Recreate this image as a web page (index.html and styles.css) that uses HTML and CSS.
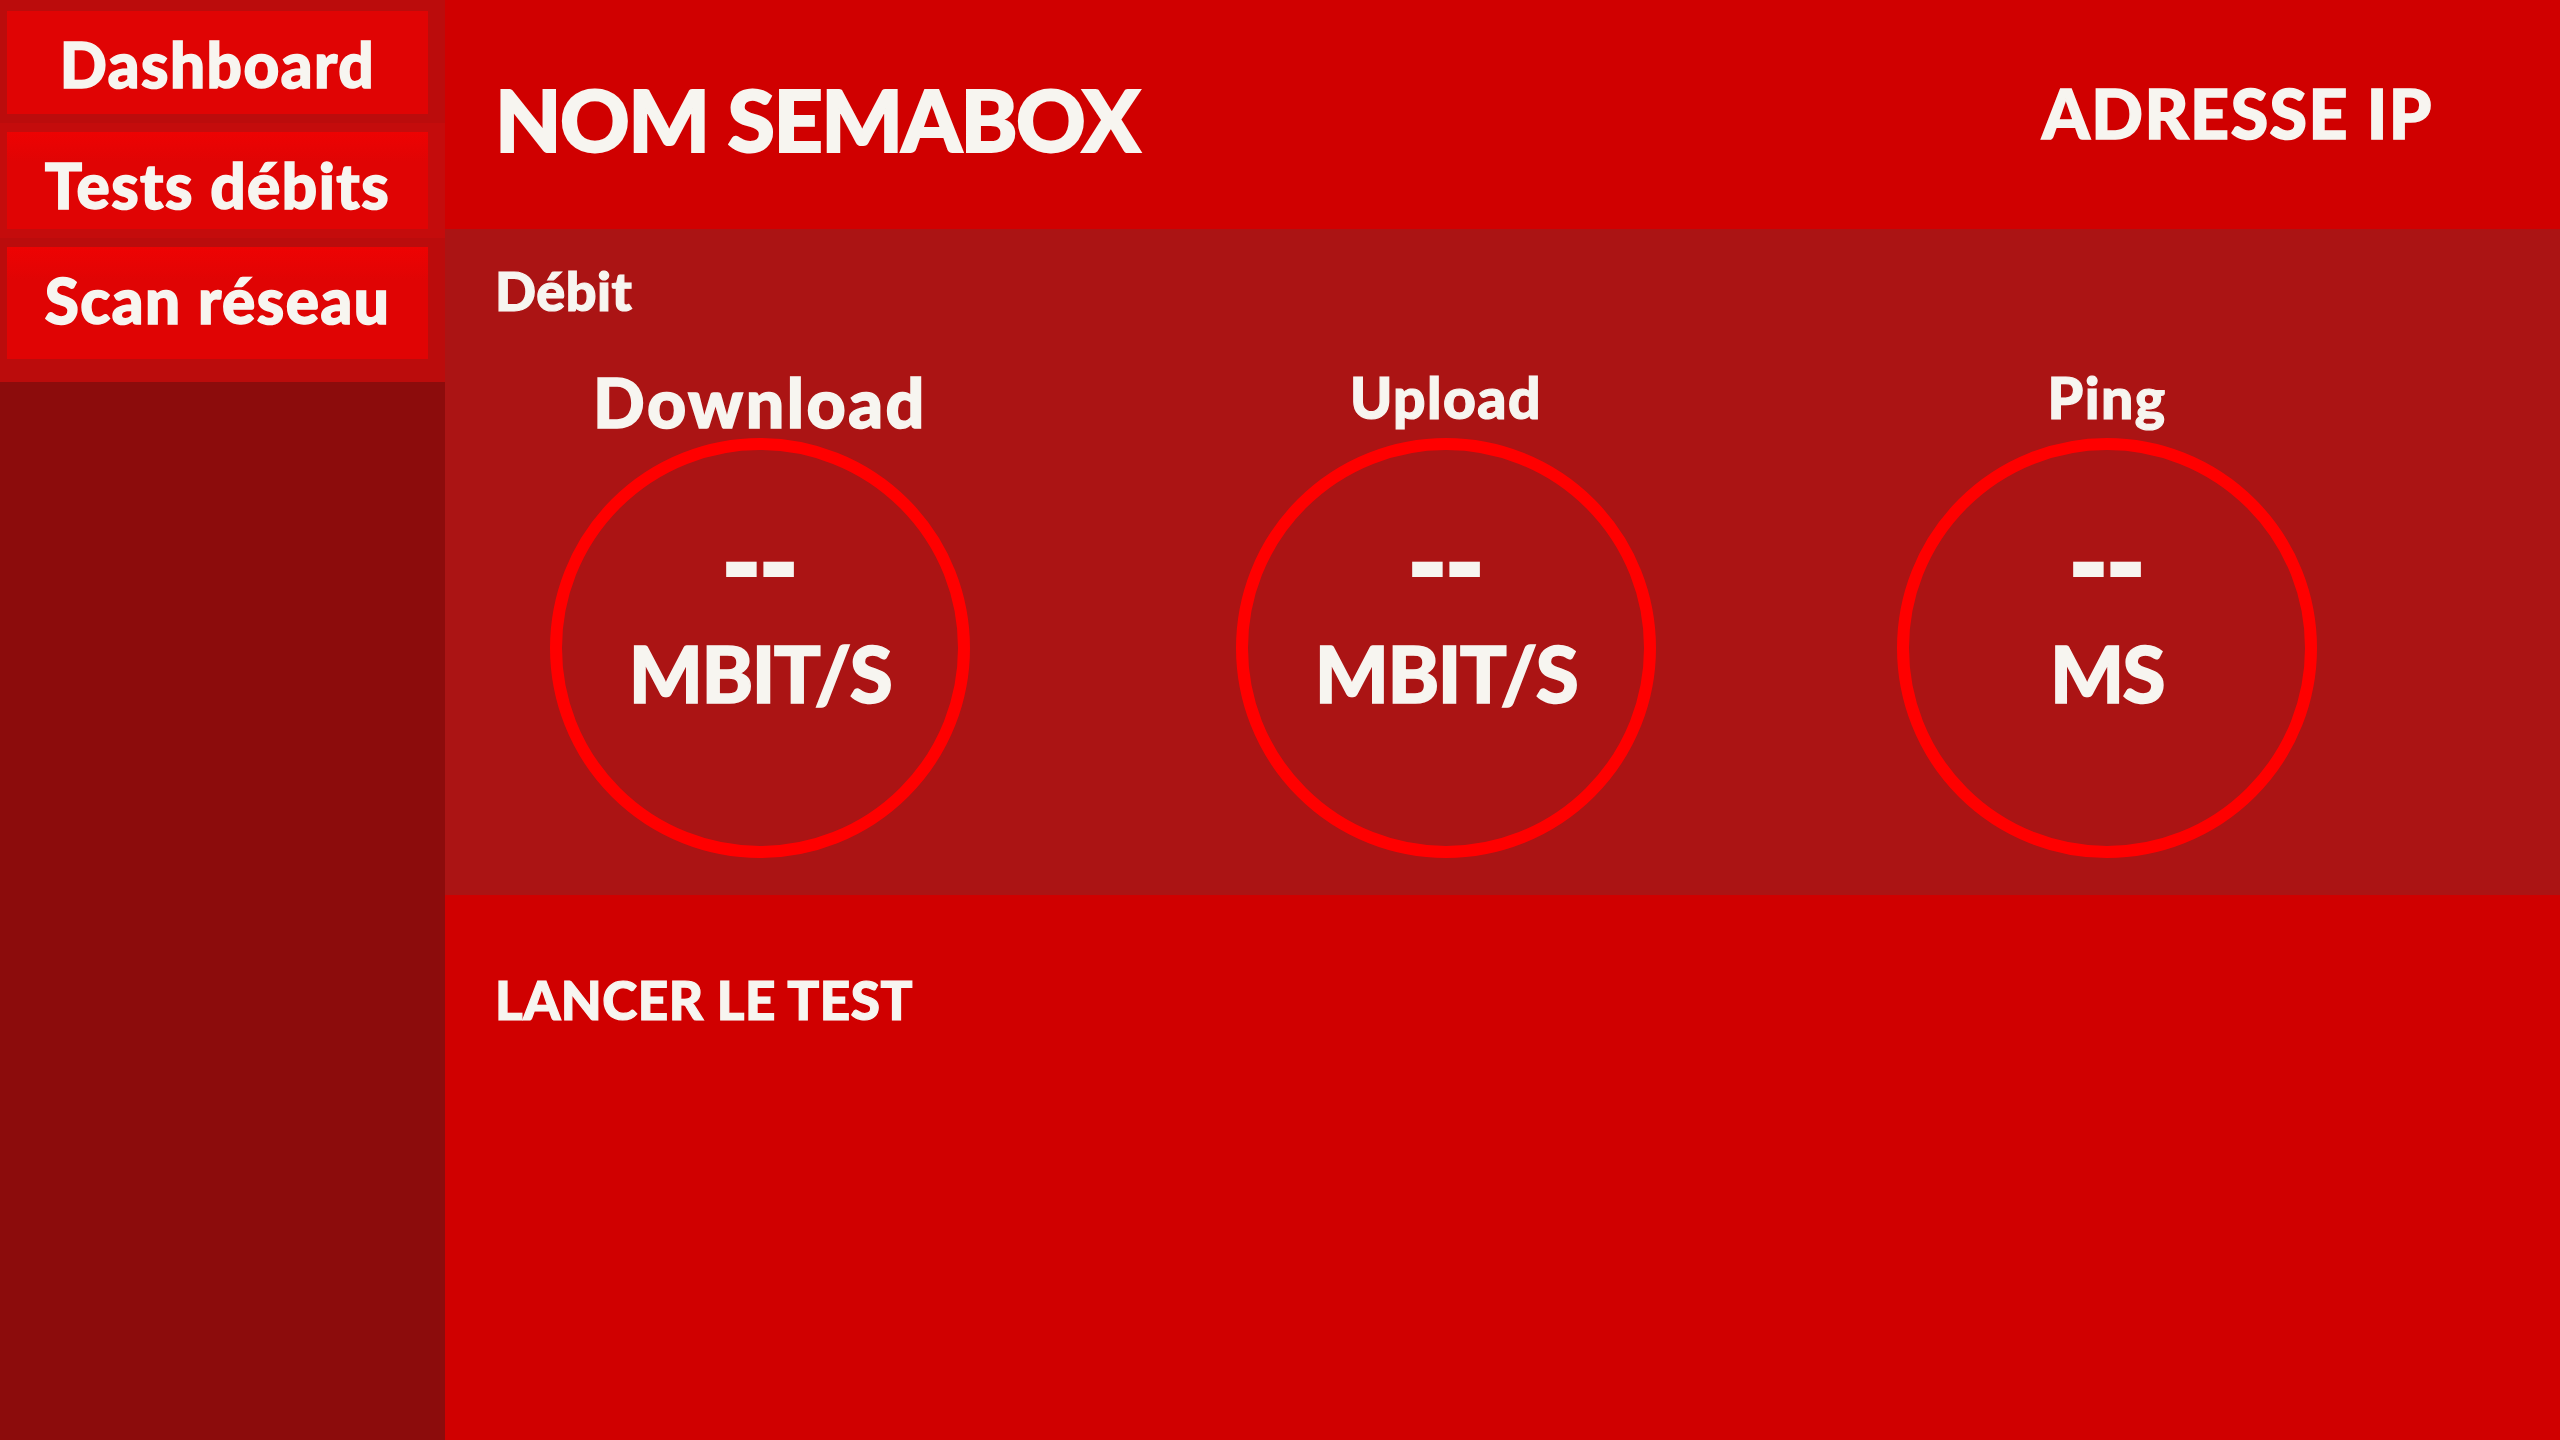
FILE: index.html
```html
<!DOCTYPE html>
<html lang="fr">
<head>
<meta charset="utf-8">
<title>Semabox</title>
<link rel="stylesheet" href="styles.css">
</head>
<body>
<div class="app">
  <aside class="sidebar">
    <ul class="nav">
      <li class="nav-item"><a class="nav-btn nav-btn--a" href="#">Dashboard</a></li>
      <li class="nav-item nav-item--alt"><a class="nav-btn nav-btn--b" href="#">Tests débits</a></li>
      <li class="nav-item"><a class="nav-btn nav-btn--c" href="#">Scan réseau</a></li>
    </ul>
  </aside>
  <main class="main">
    <header class="topbar">
      <h1 class="box-name">NOM SEMABOX</h1>
      <div class="ip">ADRESSE IP</div>
    </header>
    <section class="debit">
      <h2 class="debit-title">Débit</h2>
      <div class="gauges">
        <div class="gauge">
          <div class="gauge-label gauge-label--big">Download</div>
          <div class="ring">
            <div class="ring-value">--</div>
            <div class="ring-unit">MBIT/S</div>
          </div>
        </div>
        <div class="gauge">
          <div class="gauge-label">Upload</div>
          <div class="ring">
            <div class="ring-value">--</div>
            <div class="ring-unit">MBIT/S</div>
          </div>
        </div>
        <div class="gauge">
          <div class="gauge-label">Ping</div>
          <div class="ring">
            <div class="ring-value">--</div>
            <div class="ring-unit">MS</div>
          </div>
        </div>
      </div>
    </section>
    <section class="launch">
      <div class="launch-btn">LANCER LE TEST</div>
    </section>
  </main>
</div>
</body>
</html>
```

FILE: styles.css
```css
* { box-sizing: border-box; }

html, body {
  margin: 0;
  padding: 0;
  height: 100%;
}

body {
  font-family: "Lato", "Liberation Sans", sans-serif;
  font-weight: 900;
  color: #f7f5f0;
  background: #8c0c0c;
}

.app {
  display: flex;
  height: 1440px;
}

/* Sidebar */
.sidebar {
  width: 445px;
  flex: 0 0 445px;
  background: #8c0c0c;
}

.nav {
  list-style: none;
  margin: 0;
  padding: 2px 0 14px;
  background: #bb0c0c;
}

.nav-item {
  padding: 9px 17px 9px 7px;
}

.nav-item--alt {
  background: #c40c0c;
}

.nav-btn {
  display: block;
  background: #e00404;
  color: #f7f5f0;
  text-decoration: none;
  text-align: center;
  font-size: 62px;
  line-height: 1;
  letter-spacing: 1.5px;
  padding-top: 22px;
  -webkit-text-stroke: 1.5px #f7f5f0;
}

.nav-btn--a { height: 103px; }
.nav-btn--b { height: 97px; background: linear-gradient(#ee0202, #e00404 30%); }
.nav-btn--c { height: 112px; background: linear-gradient(#ee0202, #e00404 30%); }

/* Main */
.main {
  flex: 1;
  display: flex;
  flex-direction: column;
}

.topbar {
  height: 229px;
  background: #d00000;
  display: flex;
  justify-content: space-between;
  align-items: flex-start;
  padding: 76px 127px 0 50px;
}

.box-name {
  margin: 0;
  font-size: 86px;
  line-height: 1;
  font-weight: 900;
  letter-spacing: -1.5px;
  -webkit-text-stroke: 2px #f7f5f0;
}

.ip {
  margin-top: 3px;
  font-size: 68px;
  line-height: 1;
  letter-spacing: 1.5px;
  -webkit-text-stroke: 1.5px #f7f5f0;
}

/* Débit */
.debit {
  height: 666px;
  background: #ab1414;
  padding: 35px 50px 0 50px;
}

.debit-title {
  margin: 0;
  font-size: 54px;
  line-height: 1;
  font-weight: 900;
  letter-spacing: 0.5px;
  -webkit-text-stroke: 1.2px #f7f5f0;
}

.gauges {
  display: grid;
  grid-template-columns: 630px 742px 580px;
  margin-left: -50px;
  margin-top: 50px;
}

.gauge {
  display: flex;
  flex-direction: column;
  align-items: center;
}

.gauge-label {
  height: 70px;
  font-size: 57px;
  line-height: 1;
  padding-top: 1px;
  letter-spacing: 1.5px;
  -webkit-text-stroke: 1.2px #f7f5f0;
}

.gauge-label--big {
  font-size: 68px;
  padding-top: 0;
  letter-spacing: 2.5px;
  -webkit-text-stroke: 1.5px #f7f5f0;
}

.ring {
  width: 420px;
  height: 420px;
  border: 12px solid #ff0000;
  border-radius: 50%;
  display: flex;
  flex-direction: column;
  align-items: center;
  padding-top: 60px;
  gap: 24px;
}

.ring-value {
  font-size: 100px;
  line-height: 1;
  -webkit-text-stroke: 4px #f7f5f0;
}

.ring-unit {
  font-size: 78px;
  line-height: 1;
  letter-spacing: -1.5px;
  -webkit-text-stroke: 1.5px #f7f5f0;
}

/* Launch */
.launch {
  flex: 1;
  background: #d00000;
  padding: 78px 50px 0;
}

.launch-btn {
  font-size: 53px;
  line-height: 1;
  letter-spacing: 0.5px;
  -webkit-text-stroke: 1.2px #f7f5f0;
}
```
